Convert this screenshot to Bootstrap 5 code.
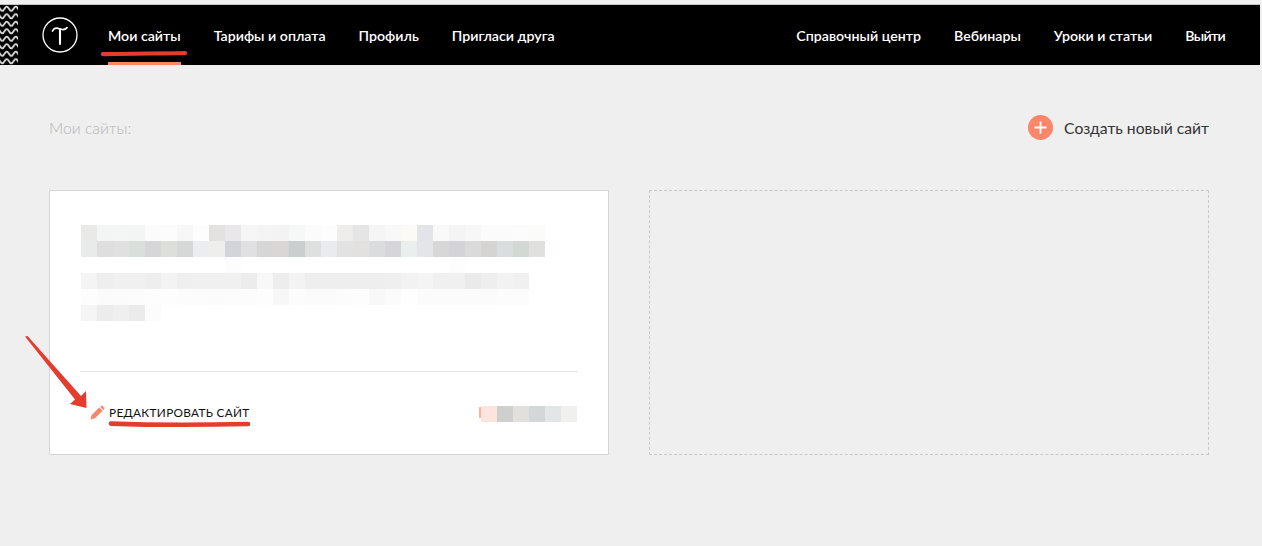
<!DOCTYPE html>
<html lang="ru">
<head>
<meta charset="utf-8">
<title>Мои сайты</title>
<link href="https://cdn.jsdelivr.net/npm/bootstrap@5.3.0/dist/css/bootstrap.min.css" rel="stylesheet">
<style>
html,body{height:100%}
body{background:#efefef;font-family:"Lato","Open Sans",sans-serif;color:#222;overflow:hidden;position:relative}
.topline{height:5px;background:#f0f0f0;border-bottom:1px solid #c4c4c4;margin-right:2px}
.topnav{height:60px;background:#000;margin-right:2px}
.zig{width:18px;height:60px;flex:none}
.logo-link{margin-left:24px;margin-right:30px;display:block;line-height:0}
.navlnk{color:#fff;text-decoration:none;font-size:14.2px;font-weight:600;line-height:62px;height:60px;display:block;position:relative;white-space:nowrap}
.navlnk.on::after{content:"";position:absolute;left:0;right:0;bottom:0;height:3px;background:#fa876b}
.navlnk.tight{letter-spacing:-.7px}
.leftnav{gap:33px}
.rightnav{gap:33px;margin-left:auto;margin-right:35px}
.pagehead{padding:0 53px 0 49px;height:125px}
.crumb{color:#b5b5b5;font-size:15.7px;font-weight:300;padding-top:2px}
.addsite{color:#333;font-size:15.7px;font-weight:400;text-decoration:none;gap:11px}
.addsite svg{flex:none}
.addsite span{padding-top:2px}
.cardrow{padding-left:49px;gap:40px}
.sitecard{width:560px;height:265px;background:#fff;border:1px solid #d6d6d6;padding:34px 30px 0 30px;flex:none}
.emptyslot{width:560px;height:265px;border:1px dashed #c8c8c8;flex:none}
.pixrow{display:flex;height:16px}
.pixrow span{display:block;width:16px;height:16px;flex:none}
#pix{margin-left:1px}
.divline{height:1px;background:#e2e2e2;margin-top:50px;width:498px}
.cardfoot{margin-top:34px;height:16px;width:498px}
.editlnk{color:#111;text-decoration:none;font-size:11.8px;font-weight:400;letter-spacing:.3px;margin-left:10px;margin-bottom:3px;gap:4px;white-space:nowrap}
.pixtag{position:relative;margin-right:1px}
.pixtag::before{content:"";position:absolute;left:-2px;top:1px;width:2px;height:11px;background:#f9b3a0}
.marks{position:absolute;left:0;top:0;pointer-events:none}
</style>
</head>
<body>
<div class="topline"></div>
<nav class="topnav d-flex align-items-center">
  <svg class="zig" viewBox="0 0 18 60" aria-hidden="true">
    <defs>
      <pattern id="zz" width="18" height="7.5" patternUnits="userSpaceOnUse">
        <path d="M-4.5 3.75Q-2.25 -.4 0 3.75T4.5 3.75 9 3.75 13.5 3.75 18 3.75 22.5 3.75" fill="none" stroke="#dcdcdc" stroke-width="1.8"/>
      </pattern>
    </defs>
    <rect width="18" height="60" fill="url(#zz)"/>
  </svg>
  <a class="logo-link" href="#" aria-label="Тильда">
    <svg width="36" height="36" viewBox="0 0 36 36" aria-hidden="true">
      <circle cx="18" cy="18" r="17" fill="none" stroke="#fff" stroke-width="1.3"/>
      <path d="M10.5 14C12 10.8 14.5 10.6 17.5 11.8S23 13 25 10.6" fill="none" stroke="#fff" stroke-width="1.7" stroke-linecap="round"/>
      <path d="M18 12.5V27" fill="none" stroke="#fff" stroke-width="2.1" stroke-linecap="round"/>
    </svg>
  </a>
  <div class="d-flex leftnav">
    <a class="navlnk on" href="#">Мои сайты</a>
    <a class="navlnk" href="#">Тарифы и оплата</a>
    <a class="navlnk" href="#">Профиль</a>
    <a class="navlnk" href="#">Пригласи друга</a>
  </div>
  <div class="d-flex rightnav">
    <a class="navlnk" href="#">Справочный центр</a>
    <a class="navlnk" href="#">Вебинары</a>
    <a class="navlnk" href="#">Уроки и статьи</a>
    <a class="navlnk tight" href="#">Выйти</a>
  </div>
</nav>
<header class="pagehead d-flex justify-content-between align-items-center">
  <div class="crumb">Мои сайты:</div>
  <a class="addsite d-flex align-items-center" href="#">
    <svg width="25" height="25" viewBox="0 0 25 25" aria-hidden="true">
      <circle cx="12.5" cy="12.5" r="12.5" fill="#fa876b"/>
      <path d="M12.5 6.5v12M6.5 12.5h12" stroke="#fff" stroke-width="1.8"/>
    </svg>
    <span>Создать новый сайт</span>
  </a>
</header>
<main class="cardrow d-flex">
  <section class="sitecard">
    <div id="pix"></div>
    <div class="divline"></div>
    <div class="cardfoot d-flex justify-content-between align-items-center">
      <a class="editlnk d-flex align-items-center" href="#">
        <svg width="15" height="15" viewBox="0 0 15 15" aria-hidden="true">
          <path d="M.4 14.6l1.3-4.6 7.6-7.6 3.3 3.3-7.6 7.6z" fill="#fa876b"/>
          <path d="M10.1 1.6l.7-.7a1.3 1.3 0 0 1 1.8 0l1.5 1.5a1.3 1.3 0 0 1 0 1.8l-.7.7z" fill="#fa876b"/>
        </svg>
        <span>РЕДАКТИРОВАТЬ САЙТ</span>
      </a>
      <div class="pixrow pixtag" id="tag"></div>
    </div>
  </section>
  <section class="emptyslot"></section>
</main>
<svg class="marks" width="1262" height="546" viewBox="0 0 1262 546" aria-hidden="true">
  <path d="M103 54.2C128 53.4 160 53.6 185 53" fill="none" stroke="#e43d30" stroke-width="4.2" stroke-linecap="round"/>
  <path d="M111 423.6C150 425 205 425 248 424" fill="none" stroke="#e43d30" stroke-width="4.6" stroke-linecap="round"/>
  <path d="M25 336.5L27.5 336L81 396L86 391L86.5 408L70 404L75 399.5Z" fill="#e43d30"/>
</svg>
<script>
const rows=[
"e9e9e8 f3f5f5 f4f5f5 f3f5f4 fbfbfb fcfcfc f7f7f7 fdfdfd e3e2e1 e9e7ea f6f6f7 f4f4f4 f3f3f3 f6f8f7 fbfbfb fdfdfd eeedeb e4e5e4 f5f5f5 f8f8f8 fbfaf5 e2e4ea f9f9f9 f4f4f4 f7f7f7 fbfbfb fbfbfb fcfcfc fbfbf9",
"e8ebe9 dedede e0e0e0 d9dfdb d6d5d8 dcdfda d5d8d7 ecedf0 eeeeec d3d3da e0e0e2 d6d6d7 d9d6d5 c9cfce dde0df e9ebef e3e2e3 e2e1df dbdcde d6d6da e9efec e4e5e8 d7d7d7 d4d4d8 dadada d5d4d2 d9dddf d2d8d2 e0e0df fdfefd",
"ffffff ffffff ffffff ffffff ffffff ffffff ffffff ffffff ffffff fdfdfd ffffff ffffff ffffff ffffff ffffff ffffff ffffff ffffff ffffff ffffff ffffff ffffff ffffff fdfdfd",
"f4f4f4 eeeeee f0f0f0 f0f0f0 eeeeee f3f3f3 efefef f0f0f0 f0f0f0 f0f0f0 ececec f8f8f8 ededed f3f3f3 eeeeee eeeeee eeeeee eeeeee eeeeee efefef f2f2f2 f4f4f4 f0f0f0 f0f0f0 eaeaea eeeeee f2f2f2 f0f0f0",
"fdfdfd fbfbfb fbfbfb fcfcfc fdfdfd fdfdfd fcfcfc fcfcfc fbfbfb fcfcfc fcfcfc fdfdfd f7f7f7 fcfcfc fbfbfb fbfbfb fcfcfc fdfdfd f8f8f8 fbfbfb fefefe fbfbfb fbfbfb fbfbfb fbfbfb fbfbfb fcfcfc fcfcfc",
"f5f5f5 ececec efefef ebebeb fcfcfc"];
const fill=(el,list)=>list.split(" ").forEach(c=>{const s=document.createElement("span");s.style.background="#"+c;el.appendChild(s)});
const host=document.getElementById("pix");
rows.forEach(r=>{const d=document.createElement("div");d.className="pixrow";fill(d,r);host.appendChild(d)});
fill(document.getElementById("tag"),"fde5dd cfcfcd e1e0dd d3d7d8 e2e6e7 f0f0ee");
</script>
<script src="https://cdn.jsdelivr.net/npm/bootstrap@5.3.0/dist/js/bootstrap.bundle.min.js"></script>
</body>
</html>
